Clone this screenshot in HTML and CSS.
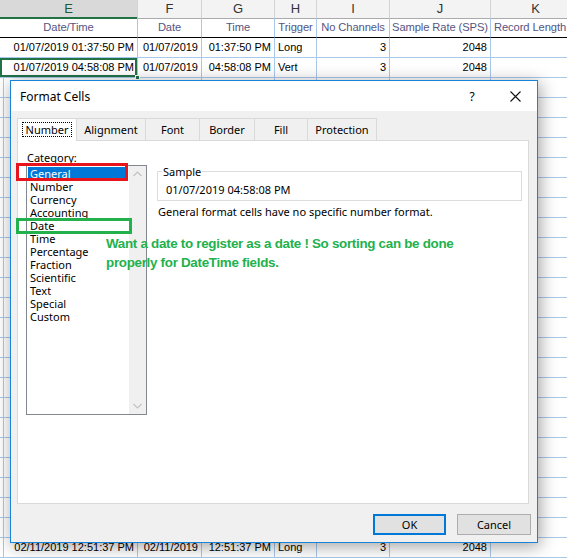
FILE: index.html
```html
<!DOCTYPE html>
<html>
<head>
<meta charset="utf-8">
<link rel="stylesheet" href="styles.css">
</head>
<body>
<div class="sheet">
  <div class="row colhdr">
    <div class="ch sel">E</div><div class="ch">F</div><div class="ch">G</div><div class="ch">H</div><div class="ch">I</div><div class="ch">J</div><div class="ch">K</div>
  </div>
  <div class="row hdr">
    <div class="c">Date/Time</div><div class="c">Date</div><div class="c">Time</div><div class="c">Trigger</div><div class="c">No Channels</div><div class="c">Sample Rate (SPS)</div><div class="c lft">Record Length</div>
  </div>
  <div class="row data">
    <div class="c r">01/07/2019 01:37:50 PM</div><div class="c r">01/07/2019</div><div class="c r">01:37:50 PM</div><div class="c l">Long</div><div class="c r">3</div><div class="c r">2048</div><div class="c"></div>
  </div>
  <div class="row data">
    <div class="c r cur">01/07/2019 04:58:08 PM</div><div class="c r">01/07/2019</div><div class="c r">04:58:08 PM</div><div class="c l">Vert</div><div class="c r">3</div><div class="c r">2048</div><div class="c"></div>
  </div>
  <div class="row data edge"><div class="c"></div><div class="c"></div><div class="c"></div><div class="c"></div><div class="c"></div><div class="c"></div><div class="c"></div></div>
  <div class="row data edge"><div class="c"></div><div class="c"></div><div class="c"></div><div class="c"></div><div class="c"></div><div class="c"></div><div class="c"></div></div>
  <div class="row data edge"><div class="c"></div><div class="c"></div><div class="c"></div><div class="c"></div><div class="c"></div><div class="c"></div><div class="c"></div></div>
  <div class="row data edge"><div class="c"></div><div class="c"></div><div class="c"></div><div class="c"></div><div class="c"></div><div class="c"></div><div class="c"></div></div>
  <div class="row data edge"><div class="c"></div><div class="c"></div><div class="c"></div><div class="c"></div><div class="c"></div><div class="c"></div><div class="c"></div></div>
  <div class="row data edge"><div class="c"></div><div class="c"></div><div class="c"></div><div class="c"></div><div class="c"></div><div class="c"></div><div class="c"></div></div>
  <div class="row data edge"><div class="c"></div><div class="c"></div><div class="c"></div><div class="c"></div><div class="c"></div><div class="c"></div><div class="c"></div></div>
  <div class="row data edge"><div class="c"></div><div class="c"></div><div class="c"></div><div class="c"></div><div class="c"></div><div class="c"></div><div class="c"></div></div>
  <div class="row data edge"><div class="c"></div><div class="c"></div><div class="c"></div><div class="c"></div><div class="c"></div><div class="c"></div><div class="c"></div></div>
  <div class="row data edge"><div class="c"></div><div class="c"></div><div class="c"></div><div class="c"></div><div class="c"></div><div class="c"></div><div class="c"></div></div>
  <div class="row data edge"><div class="c"></div><div class="c"></div><div class="c"></div><div class="c"></div><div class="c"></div><div class="c"></div><div class="c"></div></div>
  <div class="row data edge"><div class="c"></div><div class="c"></div><div class="c"></div><div class="c"></div><div class="c"></div><div class="c"></div><div class="c"></div></div>
  <div class="row data edge"><div class="c"></div><div class="c"></div><div class="c"></div><div class="c"></div><div class="c"></div><div class="c"></div><div class="c"></div></div>
  <div class="row data edge"><div class="c"></div><div class="c"></div><div class="c"></div><div class="c"></div><div class="c"></div><div class="c"></div><div class="c"></div></div>
  <div class="row data edge"><div class="c"></div><div class="c"></div><div class="c"></div><div class="c"></div><div class="c"></div><div class="c"></div><div class="c"></div></div>
  <div class="row data edge"><div class="c"></div><div class="c"></div><div class="c"></div><div class="c"></div><div class="c"></div><div class="c"></div><div class="c"></div></div>
  <div class="row data edge"><div class="c"></div><div class="c"></div><div class="c"></div><div class="c"></div><div class="c"></div><div class="c"></div><div class="c"></div></div>
  <div class="row data edge"><div class="c"></div><div class="c"></div><div class="c"></div><div class="c"></div><div class="c"></div><div class="c"></div><div class="c"></div></div>
  <div class="row data edge"><div class="c"></div><div class="c"></div><div class="c"></div><div class="c"></div><div class="c"></div><div class="c"></div><div class="c"></div></div>
  <div class="row data edge"><div class="c"></div><div class="c"></div><div class="c"></div><div class="c"></div><div class="c"></div><div class="c"></div><div class="c"></div></div>
  <div class="row data edge"><div class="c"></div><div class="c"></div><div class="c"></div><div class="c"></div><div class="c"></div><div class="c"></div><div class="c"></div></div>
  <div class="row data edge"><div class="c"></div><div class="c"></div><div class="c"></div><div class="c"></div><div class="c"></div><div class="c"></div><div class="c"></div></div>
  <div class="row data edge"><div class="c"></div><div class="c"></div><div class="c"></div><div class="c"></div><div class="c"></div><div class="c"></div><div class="c"></div></div>
  <div class="row data edge">
    <div class="c r">02/11/2019 12:51:37 PM</div><div class="c r">02/11/2019</div><div class="c r">12:51:37 PM</div><div class="c l">Long</div><div class="c r">3</div><div class="c r">2048</div><div class="c"></div>
  </div>
</div>

<div class="dialog">
  <div class="titlebar">
    <span class="title">Format Cells</span>
    <span class="help">?</span>
    <span class="close"><svg width="11" height="11" viewBox="0 0 11 11"><path d="M0.5 0.5 L10.5 10.5 M10.5 0.5 L0.5 10.5" stroke="#111" stroke-width="1.1" fill="none"/></svg></span>
  </div>
  <div class="dbody">
    <div class="tabs">
      <div class="tab active w60"><span class="focus">Number</span></div>
      <div class="tab w69">Alignment</div>
      <div class="tab w54">Font</div>
      <div class="tab w55">Border</div>
      <div class="tab w53">Fill</div>
      <div class="tab w69">Protection</div>
    </div>
    <div class="panel">
      <div class="leftcol">
        <div class="cat-label"><span class="ul">C</span>ategory:</div>
        <div class="listbox">
          <ul class="items">
            <li class="selected">General</li>
            <li>Number</li>
            <li>Currency</li>
            <li>Accounting</li>
            <li>Date</li>
            <li>Time</li>
            <li>Percentage</li>
            <li>Fraction</li>
            <li>Scientific</li>
            <li>Text</li>
            <li>Special</li>
            <li>Custom</li>
          </ul>
          <div class="scrollbar">
            <svg width="9" height="6" viewBox="0 0 9 6"><path d="M0.5 5 L4.5 1 L8.5 5" stroke="#c2c2c2" stroke-width="1.2" fill="none"/></svg>
            <svg width="9" height="6" viewBox="0 0 9 6"><path d="M0.5 1 L4.5 5 L8.5 1" stroke="#c2c2c2" stroke-width="1.2" fill="none"/></svg>
          </div>
        </div>
      </div>
      <div class="rightcol">
        <fieldset class="sample">
          <legend>Sample</legend>
          <div class="sample-val">01/07/2019 04:58:08 PM</div>
        </fieldset>
        <p class="desc">General format cells have no specific number format.</p>
      </div>
      <div class="mark red"></div>
      <div class="mark green"></div>
      <div class="note">Want a date to register as a date ! So sorting can be done<br>properly for DateTime fields.</div>
    </div>
    <div class="buttons">
      <button class="btn ok">OK</button>
      <button class="btn cancel">Cancel</button>
    </div>
  </div>
</div>
</body>
</html>
```

FILE: styles.css
```css
html, body {
  margin: 0;
  padding: 0;
  background: #fff;
  overflow: hidden;
}
body {
  width: 567px;
  height: 558px;
  position: relative;
}

/* ---------- spreadsheet ---------- */
.sheet {
  font-family: "Liberation Sans", Arial, sans-serif;
  font-size: 11px;
  letter-spacing: 0;
  color: #000;
}
.row {
  display: grid;
  grid-template-columns: 138px 64px 73px 42px 73px 101px 90px;
  height: 20px;
  width: 581px;
}
.row .c {
  box-sizing: border-box;
  border-right: 1px solid #a9c8ea;
  border-bottom: 1px solid #a9c8ea;
  white-space: nowrap;
  overflow: hidden;
  line-height: 19px;
  padding: 0 3px;
}
.row .c.r { text-align: right; }
.row .c.l { text-align: left; padding-left: 3px; }

.colhdr { height: 18px; }
.colhdr .ch {
  box-sizing: border-box;
  background: #f3f3f3;
  border-right: 1px solid #d4d4d4;
  border-bottom: 1px solid #ababab;
  text-align: center;
  font-size: 13px;
  line-height: 17px;
  color: #333;
}
.colhdr .ch.sel {
  background: #d9d9d9;
  border-bottom: 2px solid #217346;
  color: #1f5a38;
}

.hdr .c {
  border-bottom: 1px solid #000;
  text-align: center;
  color: #55557f;
  padding: 0 1px;
  font-size: 11.2px;
  letter-spacing: -0.1px;
}
.hdr .c.lft { text-align: left; padding-left: 3px; }

.cur {
  position: relative;
  box-shadow: inset 0 0 0 2px #217346;
  overflow: visible !important;
}
.cur::after {
  content: "";
  position: absolute;
  right: -3px;
  bottom: -3px;
  width: 5px;
  height: 5px;
  background: #217346;
  border: 1px solid #fff;
  box-sizing: border-box;
}
.edge .c:first-child {
  background: linear-gradient(to right, transparent 3px, #a9c8ea 3px, #a9c8ea 4px, transparent 4px);
}

/* ---------- dialog ---------- */
.dialog {
  position: absolute;
  left: 10px;
  top: 80px;
  width: 528px;
  height: 463px;
  box-sizing: border-box;
  border: 1px solid #1883d7;
  background: #f0f0f0;
  box-shadow: 2px 3px 16px rgba(0, 0, 0, 0.38);
  font-family: "Noto Sans", "Open Sans", sans-serif;
  font-size: 11px;
  color: #000;
}
.titlebar {
  height: 30px;
  background: #fff;
  display: flex;
  align-items: center;
  padding-left: 9px;
}
.title {
  font-size: 12px;
  flex: 1;
  padding-top: 1px;
}
.help {
  font-size: 12px;
  width: 12px;
  margin-right: 32px;
  text-align: center;
}
.close {
  display: flex;
  align-items: center;
  justify-content: center;
  width: 11px;
  margin-right: 16px;
}

.dbody {
  padding: 7px 6px 0 6px;
}
.tabs {
  display: flex;
  height: 22px;
  position: relative;
  z-index: 1;
}
.tab {
  box-sizing: border-box;
  height: 22px;
  border: 1px solid #d9d9d9;
  border-bottom: none;
  margin-left: -1px;
  display: flex;
  align-items: center;
  justify-content: center;
  background: #f0f0f0;
}
.tab:first-child { margin-left: 0; }
.tab.active {
  background: #fff;
  height: 23px;
  align-items: flex-start;
  padding-top: 3px;
}
.w60 { width: 60px; }
.w69 { width: 70px; }
.w54 { width: 55px; }
.w55 { width: 56px; }
.w53 { width: 54px; }
.focus {
  border: 1px dotted #000;
  padding: 0 3px;
  line-height: 13px;
}

.panel {
  position: relative;
  box-sizing: border-box;
  width: 512px;
  height: 364px;
  background: #fff;
  border: 1px solid #d9d9d9;
  padding: 9px 0 0 8px;
  display: flex;
  gap: 10px;
}
.leftcol {
  width: 121px;
}
.cat-label {
  line-height: 15px;
  height: 15px;
  padding-left: 1px;
}
.ul { text-decoration: underline; }
.listbox {
  box-sizing: border-box;
  width: 121px;
  height: 250px;
  border: 1px solid #828790;
  display: flex;
}
.items {
  list-style: none;
  margin: 0;
  padding: 1px 0 0 1px;
  flex: 1;
}
.items li {
  height: 13px;
  line-height: 13px;
  padding-left: 2px;
  width: 98px;
}
.items li.selected {
  background: #0078d7;
  color: #fff;
}
.scrollbar {
  width: 17px;
  background: #f0f0f0;
  display: flex;
  flex-direction: column;
  justify-content: space-between;
  align-items: center;
  padding: 5px 0 5px;
  box-sizing: border-box;
}

.rightcol {
  flex: 1;
}
.sample {
  box-sizing: border-box;
  width: 365px;
  margin: 14px 0 0 0;
  padding: 3px 8px 3px 8px;
  border: 1px solid #dcdcdc;
}
.sample legend {
  padding: 0 1px;
  margin-left: -4px;
  line-height: 15px;
}
.sample-val {
  line-height: 15px;
}
.desc {
  margin: 3px 0 0 1px;
  line-height: 15px;
}

.mark {
  position: absolute;
  box-sizing: border-box;
}
.mark.red {
  left: -2px;
  top: 22px;
  width: 112px;
  height: 18px;
  border: 3px solid #e8141c;
}
.mark.green {
  left: -2px;
  top: 77px;
  width: 116px;
  height: 16px;
  border: 3px solid #22b14c;
}
.note {
  position: absolute;
  left: 88px;
  top: 93px;
  font-family: "Liberation Sans", Arial, sans-serif;
  font-weight: bold;
  font-size: 13.4px;
  letter-spacing: -0.3px;
  line-height: 19px;
  color: #22b14c;
  white-space: nowrap;
}

.buttons {
  display: flex;
  justify-content: flex-end;
  gap: 11px;
  margin-top: 10px;
}
.btn {
  box-sizing: border-box;
  height: 21px;
  background: #e1e1e1;
  font-family: "Noto Sans", "Open Sans", sans-serif;
  font-size: 11px;
  color: #000;
  padding: 0;
}
.btn.ok {
  width: 73px;
  border: 2px solid #0078d7;
}
.btn.cancel {
  width: 74px;
  border: 1px solid #adadad;
}
```
